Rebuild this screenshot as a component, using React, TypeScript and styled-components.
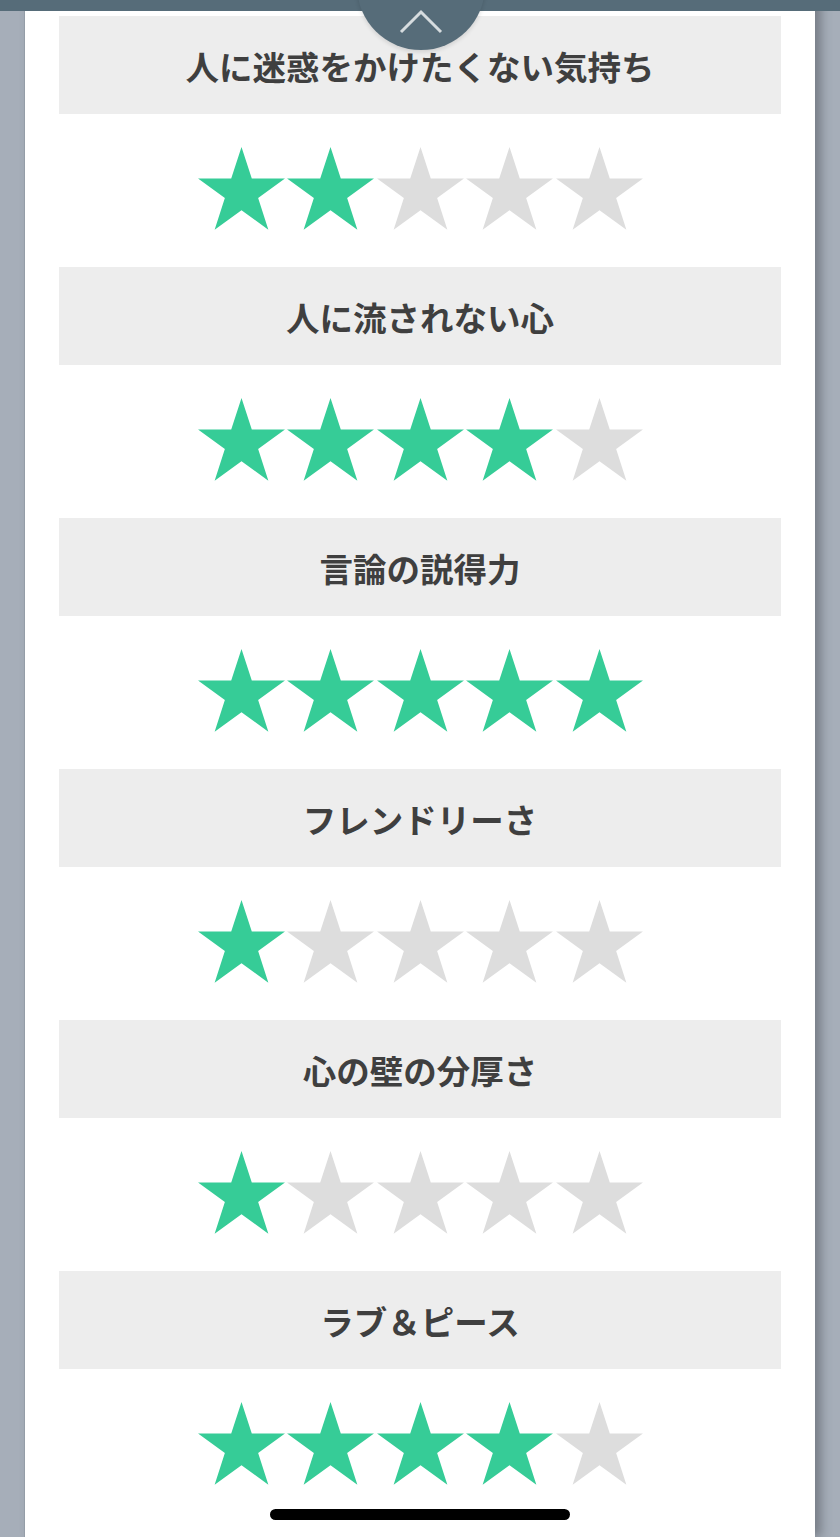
import styled, { createGlobalStyle } from 'styled-components'

const GlobalStyle = createGlobalStyle`
  html, body {
    margin: 0;
    padding: 0;
    background: #a6aeb9;
    font-family: "Noto Sans CJK JP", "Noto Sans", sans-serif;
  }
  body {
    height: 1537px;
    overflow: hidden;
  }
`

const ratings = [
  { label: '人に迷惑をかけたくない気持ち', value: 2 },
  { label: '人に流されない心', value: 4 },
  { label: '言論の説得力', value: 5 },
  { label: 'フレンドリーさ', value: 1 },
  { label: '心の壁の分厚さ', value: 1 },
  { label: 'ラブ＆ピース', value: 4 },
]

const TopBar = styled.div`
  position: fixed;
  top: 0;
  left: 0;
  right: 0;
  height: 11px;
  background: #566c79;
  z-index: 10;
`

const ScrollTab = styled.div`
  position: fixed;
  top: -78px;
  left: 357px;
  width: 128px;
  height: 128px;
  border-radius: 50%;
  background: #566c79;
  box-shadow: 0 2px 4px rgba(0, 0, 0, 0.12);
  z-index: 11;
  display: flex;
  align-items: flex-end;
  justify-content: center;
  padding-bottom: 16px;
  box-sizing: border-box;
`

const Panel = styled.main`
  margin: 0 25px;
  min-height: 1537px;
  background: #fff;
  padding: 16px 34px 0;
  box-shadow: 6px 0 10px rgba(60, 64, 70, 0.45), -1px 0 0 #9aa2ad;
  box-sizing: border-box;
`

const Section = styled.section`
  display: flex;
  flex-direction: column;
`

const Label = styled.h2`
  margin: 0;
  height: 98px;
  background: #ededed;
  display: flex;
  align-items: center;
  justify-content: center;
  font-size: 33.5px;
  font-weight: 700;
  color: #3f3f3f;
`

const StarRow = styled.div`
  height: 153px;
  display: flex;
  justify-content: center;
  align-items: flex-start;
  gap: 2.5px;
  padding-top: 33px;
  box-sizing: border-box;
`

const StarSvg = styled.svg<{ $on: boolean }>`
  width: 87px;
  height: 84px;
  fill: ${(p) => (p.$on ? '#36cc97' : '#dddddd')};
`

const HomeIndicator = styled.div`
  position: fixed;
  left: 270px;
  bottom: 17px;
  width: 300px;
  height: 11px;
  border-radius: 6px;
  background: #000;
  z-index: 10;
`

const Star = ({ on }: { on: boolean }) => {
  const pts: string[] = []
  for (let i = 0; i < 10; i++) {
    const r = i % 2 === 0 ? 45.7 : 17.5
    const a = (-90 + i * 36) * (Math.PI / 180)
    pts.push(`${(43.5 + r * Math.cos(a)).toFixed(2)},${(45.7 + r * Math.sin(a)).toFixed(2)}`)
  }
  return (
    <StarSvg $on={on} viewBox="0 0 87 84">
      <polygon points={pts.join(' ')} />
    </StarSvg>
  )
}

export default function App() {
  return (
    <>
      <GlobalStyle />
      <TopBar />
      <ScrollTab>
        <svg width="44" height="26" viewBox="0 0 44 26">
          <polyline points="2,24 22,4 42,24" fill="none" stroke="#d6dcdf" strokeWidth="3" />
        </svg>
      </ScrollTab>
      <Panel>
        {ratings.map((r) => (
          <Section key={r.label}>
            <Label>{r.label}</Label>
            <StarRow>
              {[0, 1, 2, 3, 4].map((i) => (
                <Star key={i} on={i < r.value} />
              ))}
            </StarRow>
          </Section>
        ))}
      </Panel>
      <HomeIndicator />
    </>
  )
}
